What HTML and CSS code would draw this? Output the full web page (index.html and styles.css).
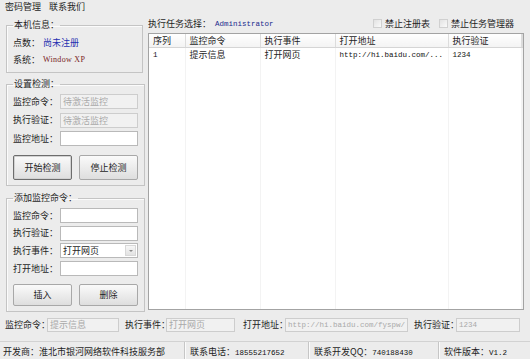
FILE: index.html
```html
<!DOCTYPE html>
<html lang="zh-CN">
<head>
    <meta charset="UTF-8">
    <title>监控</title>
    <link rel="stylesheet" href="styles.css">
</head>
<body>
    <div class="menubar">
        <span>密码管理</span>
        <span>联系我们</span>
    </div>

    <div class="main">
        <div class="side">
            <fieldset class="group group-info">
                <legend>本机信息：</legend>
                <div class="info-row"><span>点数：</span><span class="blue">尚未注册</span></div>
                <div class="info-row"><span>系统：</span><span class="mono red">Window XP</span></div>
            </fieldset>

            <fieldset class="group group-check">
                <legend>设置检测：</legend>
                <div class="form">
                    <label>监控命令：</label><div class="box disabled">待激活监控</div>
                    <label>执行验证：</label><div class="box disabled">待激活监控</div>
                    <label>监控地址：</label><div class="box"></div>
                </div>
                <div class="buttons">
                    <button class="btn default">开始检测</button>
                    <button class="btn">停止检测</button>
                </div>
            </fieldset>

            <fieldset class="group group-add">
                <legend>添加监控命令：</legend>
                <div class="form tight">
                    <label>监控命令：</label><div class="box"></div>
                    <label>执行验证：</label><div class="box"></div>
                    <label>执行事件：</label><div class="box combo"><span>打开网页</span><span class="arrow"></span></div>
                    <label>打开地址：</label><div class="box"></div>
                </div>
                <div class="buttons small">
                    <button class="btn">插入</button>
                    <button class="btn">删除</button>
                </div>
            </fieldset>
        </div>

        <div class="content">
            <div class="toolbar">
                <span>执行任务选择：</span>
                <span class="mono navy user">Administrator</span>
                <span class="spacer"></span>
                <span class="check"><span class="checkbox"></span>禁止注册表</span>
                <span class="check"><span class="checkbox"></span>禁止任务管理器</span>
            </div>
            <div class="listview">
                <table>
                    <colgroup>
                        <col style="width: 36px">
                        <col style="width: 75px">
                        <col style="width: 75px">
                        <col style="width: 113px">
                        <col style="width: 73px">
                        <col>
                    </colgroup>
                    <thead>
                        <tr><th>序列</th><th>监控命令</th><th>执行事件</th><th>打开地址</th><th>执行验证</th><th></th></tr>
                    </thead>
                    <tbody>
                        <tr><td class="mono">1</td><td>提示信息</td><td>打开网页</td><td class="mono">http://hi.baidu.com/...</td><td class="mono">1234</td><td></td></tr>
                        <tr class="filler"><td></td><td></td><td></td><td></td><td></td><td></td></tr>
                    </tbody>
                </table>
            </div>
        </div>
    </div>

    <div class="fields">
        <label class="f1">监控命令：</label><div class="box disabled w1">提示信息</div>
        <label class="f2">执行事件：</label><div class="box disabled w2">打开网页</div>
        <label class="f3">打开地址：</label><div class="box disabled w3 mono">http://hi.baidu.com/fyspw/</div>
        <label class="f4">执行验证：</label><div class="box disabled w4 mono">1234</div>
    </div>

    <div class="statusbar">
        <div class="cell s1">开发商：淮北市银河网络软件科技服务部</div>
        <div class="cell s2">联系电话：<span class="mono">18555217652</span></div>
        <div class="cell s3">联系开发QQ：<span class="mono">740188430</span></div>
        <div class="cell s4">软件版本：<span class="mono">V1.2</span></div>
    </div>
</body>
</html>
```

FILE: styles.css
```css
body {
    margin: 0;
    width: 530px;
    height: 359px;
    overflow: hidden;
    background: #ececec;
    color: #1e1e1e;
    font-family: "Noto Sans CJK SC", "Noto Sans", sans-serif;
    font-size: 9px;
    line-height: 12px;
}
.mono {
    font-family: "Liberation Mono", "DejaVu Sans Mono", monospace;
    font-size: 7.5px;
    color: #111;
}
.blue { color: #1f2fb0; margin-left: 3px; }
.red { color: #7a1f1f; margin-left: 3px; }
.navy { color: #1b2a8c; }

.menubar {
    height: 14px;
    line-height: 14px;
    padding-left: 5px;
    display: flex;
    gap: 8px;
}

.main {
    display: flex;
    gap: 5px;
    padding: 0 6px;
    height: 297px;
}
.side {
    width: 137px;
    display: flex;
    flex-direction: column;
}
.group {
    margin: 0;
    border: 1px solid #c4c4c4;
    box-shadow: inset 1px 1px 0 #fbfbfb;
    padding: 4px 6px 5px 6px;
}
.group legend {
    padding: 0 1px;
    margin-left: 0;
    line-height: 12px;
}
.group-info { margin-top: 5px; padding-top: 5px; padding-bottom: 2px; }
.info-row { height: 14px; line-height: 14px; margin-bottom: 3px; display: flex; }
.info-row .mono { font-family: "Liberation Serif", serif; font-size: 8px; letter-spacing: 0.3px; color: #7a1f1f; }
.group-check { margin-top: 5px; }
.group-add { margin-top: 6px; }

.form {
    display: grid;
    grid-template-columns: 47px 78px;
    row-gap: 3.5px;
    align-items: center;
}
.form.tight { row-gap: 2.7px; }
.box {
    height: 15px;
    box-sizing: border-box;
    border: 1px solid #b9b9b9;
    background: #fff;
    line-height: 13px;
    padding-left: 2px;
    white-space: nowrap;
    overflow: hidden;
}
.box.disabled {
    background: #f1f1f1;
    color: #a9a9a9;
    border-color: #cdcdcd;
}
.combo {
    display: flex;
    justify-content: space-between;
    color: #1e1e1e;
}
.combo .arrow {
    width: 11px;
    height: 11px;
    margin: 1px 1px 0 0;
    background: linear-gradient(#f7f7f7, #e2e2e2);
    border: 1px solid #d8d8d8;
    box-sizing: border-box;
    position: relative;
}
.combo .arrow::after {
    content: "";
    position: absolute;
    left: 3px;
    top: 4px;
    border-left: 2px solid transparent;
    border-right: 2px solid transparent;
    border-top: 2px solid #8a8a8a;
}

.buttons {
    display: flex;
    justify-content: space-between;
    margin-top: 9px;
}
.buttons.small { margin-top: 7.5px; }
.btn {
    width: 59px;
    height: 25px;
    padding: 0;
    font: inherit;
    color: #1e1e1e;
    border: 1px solid #a8a8a8;
    border-radius: 2px;
    background: linear-gradient(#fafafa, #ececec 50%, #dedede);
}
.btn.default { border-color: #6d6d6d; box-shadow: inset 0 0 0 1px #d2d2d2; }
.buttons.small .btn { height: 22px; }

.content {
    flex: 1;
    display: flex;
    flex-direction: column;
}
.toolbar {
    height: 19px;
    display: flex;
    align-items: center;
}
.user { margin-left: 4px; color: #1b2a8c; }
.spacer { flex: 1; }
.check { display: flex; align-items: center; margin-right: 10px; }
.check .checkbox {
    width: 9px;
    height: 9px;
    box-sizing: border-box;
    border: 1px solid #d0d0d0;
    background: linear-gradient(135deg, #e2e2e2, #fafafa);
    margin-right: 3px;
}
.check + .check { margin-left: -1px; }

.listview {
    height: 277px;
    box-sizing: border-box;
    border: 1px solid #a3a3a3;
    background: #fff;
    overflow: hidden;
}
table {
    width: 100%;
    height: 100%;
    border-collapse: collapse;
    table-layout: fixed;
}
th {
    height: 13px;
    padding: 0 0 0 4px;
    text-align: left;
    font-weight: normal;
    line-height: 12px;
    background: linear-gradient(#ffffff, #f3f3f3);
    border-right: 1px solid #dcdcdc;
    border-bottom: 1px solid #d5d5d5;
}
td {
    height: 13px;
    padding: 0 0 0 4px;
    white-space: nowrap;
    overflow: hidden;
    border-right: 1px solid #f3f3f3;
    vertical-align: middle;
}
.filler td { height: auto; }

.fields {
    height: 28px;
    display: flex;
    align-items: center;
    padding-left: 5px;
}
.fields label { white-space: nowrap; }
.fields .box { height: 14px; line-height: 12px; }
.fields .box.mono { color: #a9a9a9; }
.f1 { width: 42px; }
.w1 { width: 72px; }
.f2 { width: 41px; margin-left: 6px; }
.w2 { width: 69px; }
.f3 { width: 42px; margin-left: 8px; }
.w3 { width: 123px; }
.f4 { width: 42px; margin-left: 6px; }
.w4 { width: 64px; }

.statusbar {
    margin-top: 2px;
    height: 18px;
    display: flex;
    border-top: 1px solid #d2d2d2;
    box-sizing: border-box;
}
.cell {
    padding-top: 2px;
    line-height: 16px;
    padding-left: 3px;
    border-right: 1px solid #c6c6c6;
    box-shadow: 1px 0 0 #fbfbfb;
    white-space: nowrap;
}
.s1 { width: 181px; }
.s2 { width: 118px; padding-left: 5px; }
.s3 { width: 124px; padding-left: 5px; }
.s4 { flex: 1; border-right: none; padding-left: 5px; }
```
